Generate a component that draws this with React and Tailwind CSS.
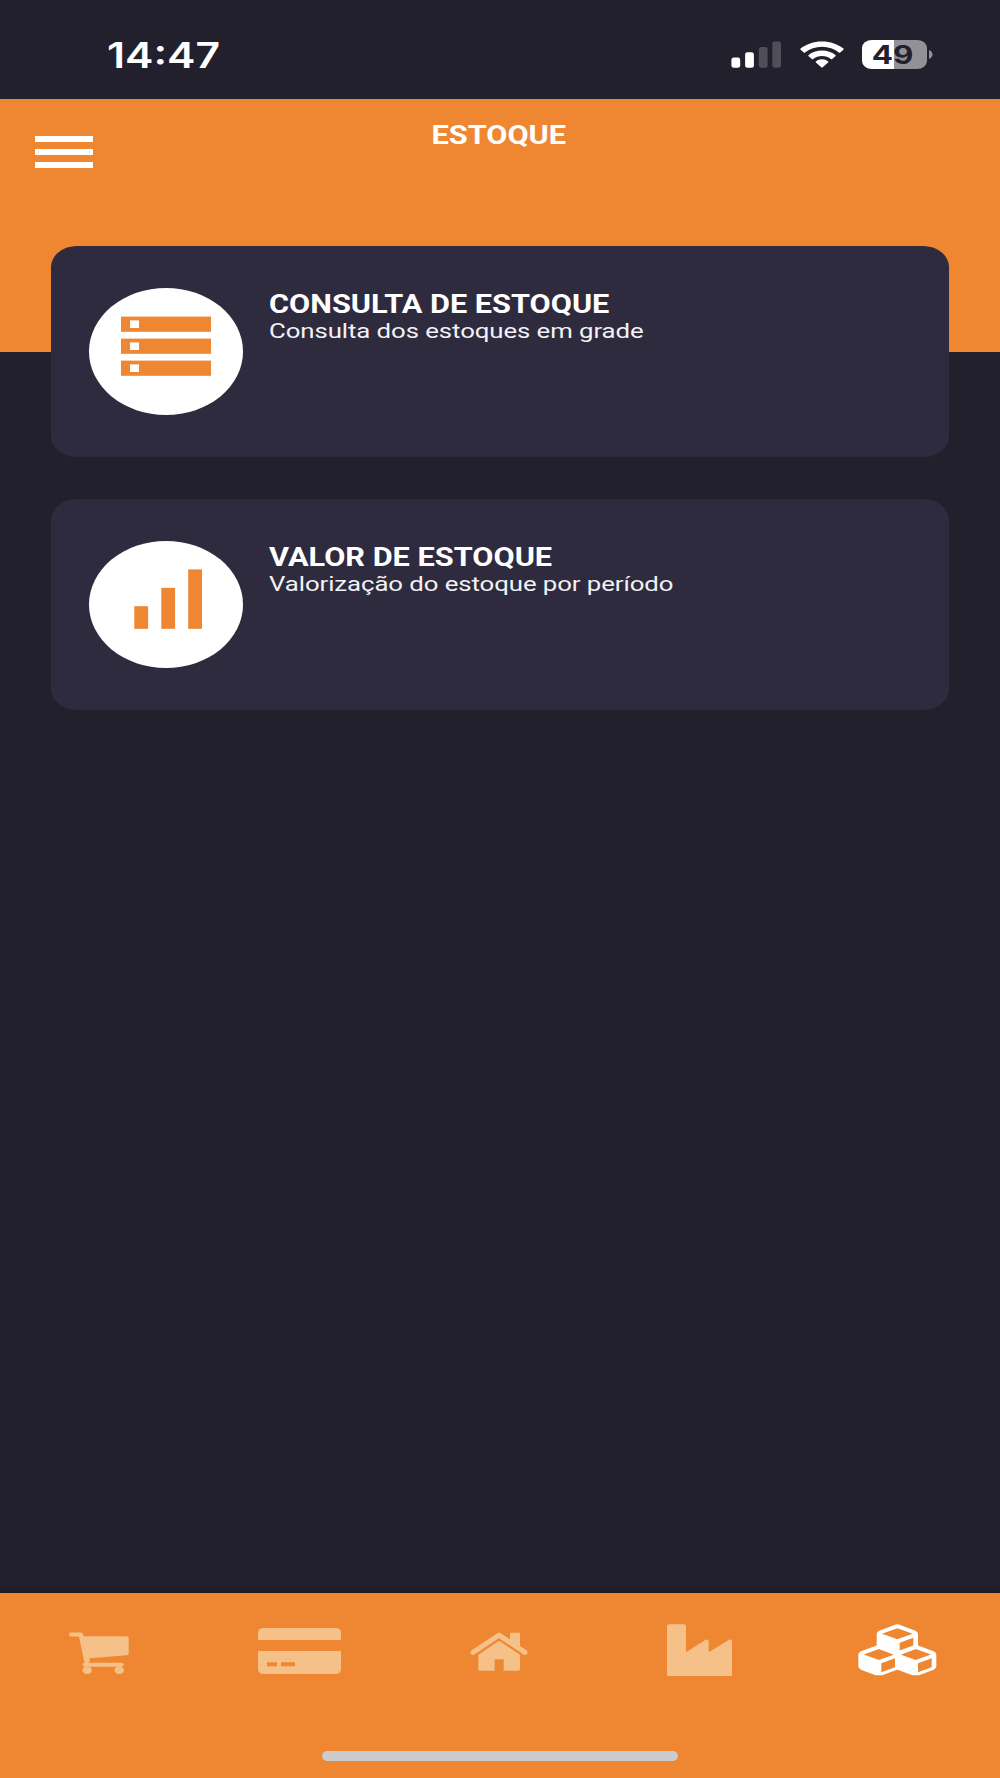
const cards = [
  {
    title: "CONSULTA DE ESTOQUE",
    description: "Consulta dos estoques em grade",
    icon: StorageIcon,
  },
  {
    title: "VALOR DE ESTOQUE",
    description: "Valorização do estoque por período",
    icon: BarsIcon,
  },
];

function StorageIcon() {
  return (
    <svg width="90" height="60" viewBox="0 0 90 60" fill="#ef8732">
      {[0.6, 22.6, 44.6].map((y) => (
        <g key={y}>
          <rect x="0" y={y} width="90" height="15.2" />
          <rect x="9" y={y + 3.8} width="9" height="7.6" fill="#fff" />
        </g>
      ))}
    </svg>
  );
}

function BarsIcon() {
  return (
    <svg width="90" height="60" viewBox="0 0 90 60" fill="#ef8732">
      <rect x="13.3" y="37.2" width="13.8" height="22.6" />
      <rect x="40.3" y="18.8" width="13.8" height="41" />
      <rect x="67.2" y="0.4" width="13.8" height="59.4" />
    </svg>
  );
}

function SignalIcon() {
  return (
    <svg width="50" height="27" viewBox="0 0 50 27" fill="#fff">
      <rect x="0.4" y="16.5" width="8.8" height="10.3" rx="2.4" />
      <rect x="14.1" y="11.3" width="8.8" height="15.5" rx="2.4" />
      <rect x="27.8" y="6" width="8.8" height="20.8" rx="2.4" fill="#504e59" />
      <rect x="41.3" y="0.5" width="8.7" height="26.3" rx="2.4" fill="#504e59" />
    </svg>
  );
}

function WifiIcon() {
  return (
    <svg width="44" height="27" viewBox="0 0 44 27" fill="#fff">
      <path d="M22 0.4C30.4 0.4 38 3.1 43.4 7.6Q44 8.2 43.4 8.8L40.2 11.5Q39.6 12 38.9 11.5C34.3 7.9 28.4 5.8 22 5.8S9.7 7.9 5.1 11.5Q4.4 12 3.8 11.5L0.6 8.8Q0 8.2 0.6 7.6C6 3.1 13.6 0.4 22 0.4Z" />
      <path d="M22 9.5C27.2 9.5 31.9 11.2 35.4 14Q36.1 14.6 35.4 15.2L32.2 17.9Q31.6 18.4 30.9 17.9C28.5 16 25.4 14.9 22 14.9S15.5 16 13.1 17.9Q12.4 18.4 11.8 17.9L8.6 15.2Q7.9 14.6 8.6 14C12.1 11.2 16.8 9.5 22 9.5Z" />
      <path d="M22 18.3C24.3 18.3 26.5 19.1 28.1 20.4Q28.8 21 28.1 21.6L22.7 26.3Q22 26.8 21.3 26.3L15.9 21.6Q15.2 21 15.9 20.4C17.5 19.1 19.7 18.3 22 18.3Z" />
    </svg>
  );
}

function Battery() {
  return (
    <div className="flex items-center gap-[2px]">
      <div className="flex h-[29px] w-[65px] items-center justify-center overflow-hidden bg-linear-to-r from-white from-49% to-[#929197] to-49% pt-[2px] pr-[3px] [border-radius:10px_/_8px]">
        <span className="inline-block scale-x-[1.26] font-['Inter'] text-[25px] leading-none font-bold text-[#23202e]">
          49
        </span>
      </div>
      <svg width="4" height="9" viewBox="0 0 4 9" fill="#929197">
        <path d="M0 0C2 0.7 3.5 2.3 3.5 4.5S2 8.3 0 9Z" />
      </svg>
    </div>
  );
}

function CartIcon() {
  return (
    <svg width="60" height="42" viewBox="0 0 180 126" fill="currentColor">
      <path d="M30 13H173Q179 13 179 19V64Q179 69 174 69.5L62 79V90H46Z" />
      <path
        d="M6 7.5H36L53 90"
        fill="none"
        stroke="currentColor"
        strokeWidth="12"
        strokeLinecap="round"
        strokeLinejoin="round"
      />
      <rect x="41" y="92" width="123" height="12.5" rx="6" />
      <ellipse cx="54.5" cy="115" rx="14" ry="11.5" />
      <ellipse cx="150.5" cy="115" rx="14" ry="11.5" />
    </svg>
  );
}

function CreditCardIcon() {
  return (
    <svg width="83" height="46" viewBox="0 0 249 138" fill="currentColor">
      <path d="M0 36V16Q0 0 18 0H231Q249 0 249 16V36Z" />
      <path
        fillRule="evenodd"
        d="M0 69H249V122Q249 138 231 138H18Q0 138 0 122ZM27 103V115H57V103ZM69 103V115H111V103Z"
      />
    </svg>
  );
}

function HomeIcon() {
  return (
    <svg width="58" height="39" viewBox="0 0 174 117" fill="currentColor">
      <path d="M120 5Q120 2 123 2H147Q150 2 150 5V50L120 30Z" />
      <path
        d="M9 61L87 9.5L165 61"
        fill="none"
        stroke="currentColor"
        strokeWidth="15"
        strokeLinecap="round"
        strokeLinejoin="round"
      />
      <path d="M87 26L150 68V111Q150 116 144 116H101V82H74V116H31Q25 116 25 111V68Z" />
    </svg>
  );
}

function FactoryIcon() {
  return (
    <svg width="65" height="52" viewBox="0 0 195 156" fill="currentColor">
      <path d="M0 7Q0 1 7 1H50Q57 1 57 7V85L116 47Q125 44 125 52V85L186 47Q195 44 195 52V156H0Z" />
    </svg>
  );
}

function CubesIcon() {
  return (
    <svg width="79" height="52" viewBox="0 0 237 156" fill="currentColor">
      {[
        [0, 0],
        [-55, 62],
        [55, 62],
      ].map(([x, y]) => (
        <path
          key={x}
          transform={`translate(${x} ${y})`}
          fillRule="evenodd"
          d="M113 1.5Q118 0 123 1.5L172 20Q180 24 180 30V65Q180 71 172 75L128 92H108L64 75Q56 71 56 65V30Q56 24 64 20ZM118 13L72 29.5L118 46L164 29.5ZM125 56V83L166 68V41Z"
        />
      ))}
    </svg>
  );
}

function MenuCard({ title, description, icon: Icon }) {
  return (
    <div className="flex h-[211px] bg-[#2f2b3e] pt-[42px] pl-[38px] [border-radius:26px_/_21px]">
      <div className="flex h-[127px] w-[154px] shrink-0 justify-center rounded-[50%] bg-white pt-[28px]">
        <Icon />
      </div>
      <div className="ml-[26px] flex origin-left scale-x-[1.228] flex-col items-start pt-[3px] whitespace-nowrap text-white">
        <h2 className="text-[25px] leading-[28px] font-bold">{title}</h2>
        <p className="text-[21px] leading-[24px] tracking-[-0.07px] text-[#f3f2f5]">
          {description}
        </p>
      </div>
    </div>
  );
}

export default function App() {
  return (
    <div className="flex h-[1778px] w-[1000px] flex-col overflow-hidden bg-[#23202e] font-['Roboto',sans-serif]">
      {/* Status bar */}
      <div className="flex h-[99px] shrink-0 items-start justify-between pr-[67px] pl-[107px]">
        <span className="mt-[37px] inline-block origin-left scale-x-[1.22] font-['Inter'] text-[35px] leading-[36px] font-semibold text-white">
          14:47
        </span>
        <div className="mt-[40px] flex h-[29px] items-center">
          <SignalIcon />
          <div className="ml-[19px]">
            <WifiIcon />
          </div>
          <div className="ml-[18px]">
            <Battery />
          </div>
        </div>
      </div>

      {/* Header */}
      <header className="flex h-[253px] shrink-0 items-start bg-[#ef8732] text-white">
        <button className="mt-[37px] ml-[35px] flex w-[58px] flex-col gap-[7px]">
          <span className="h-[6px] w-full bg-white" />
          <span className="h-[6px] w-full bg-white" />
          <span className="h-[6px] w-full bg-white" />
        </button>
        <h1 className="mt-[22px] mr-[95px] flex-1 text-center text-[25px] leading-[30px] font-bold">
          <span className="inline-block scale-x-[1.228]">ESTOQUE</span>
        </h1>
      </header>

      {/* Cards */}
      <main className="-mt-[106px] flex flex-1 flex-col gap-[42px] px-[51px]">
        {cards.map((card) => (
          <MenuCard key={card.title} {...card} />
        ))}
      </main>

      {/* Bottom navigation */}
      <nav className="flex h-[185.5px] shrink-0 flex-col items-center bg-[#ef8732] text-[#f5c189] shadow-[0_-2px_6px_rgba(0,0,0,0.3)]">
        <div className="flex h-[158px] w-full items-start">
          <div className="ml-[69px] pt-[39px]">
            <CartIcon />
          </div>
          <div className="ml-[129px] pt-[35.5px]">
            <CreditCardIcon />
          </div>
          <div className="ml-[129px] pt-[39px]">
            <HomeIcon />
          </div>
          <div className="ml-[139px] pt-[31.5px]">
            <FactoryIcon />
          </div>
          <div className="ml-[126px] pt-[31.5px] text-white">
            <CubesIcon />
          </div>
        </div>
        <div className="h-[10.5px] w-[356px] rounded-full bg-[#cbcbcb]" />
      </nav>
    </div>
  );
}
